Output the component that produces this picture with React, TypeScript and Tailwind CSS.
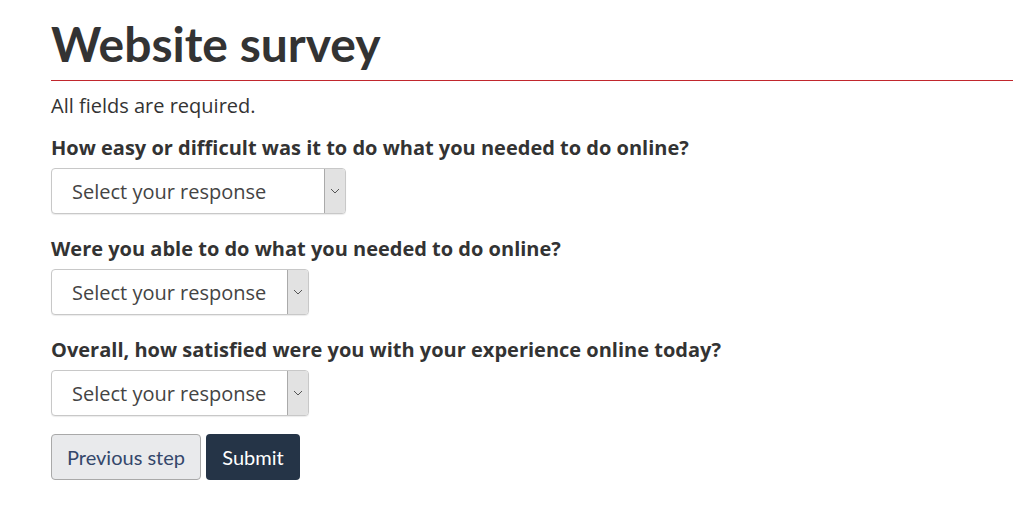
import React from 'react';

const questions = [
  { label: 'How easy or difficult was it to do what you needed to do online?', width: 'w-[295px]' },
  { label: 'Were you able to do what you needed to do online?', width: 'w-[258px]' },
  { label: 'Overall, how satisfied were you with your experience online today?', width: 'w-[258px]' },
];

function Chevron() {
  return (
    <svg width="10" height="6" viewBox="0 0 10 6" fill="none">
      <path d="M1 1 L5 5 L9 1" stroke="#555" strokeWidth="1" />
    </svg>
  );
}

export default function App() {
  return (
    <div className="min-h-[511px] bg-white pl-[51px] text-[#333] font-['Open_Sans',sans-serif]">
      <h1 className="pt-[15px] pb-[7px] font-['Lato',sans-serif] font-bold text-[48px] leading-[58px] text-[#333]">
        Website survey
      </h1>
      <div className="h-px bg-[#c1272d]" />
      <p className="mt-[11px] text-[20px] leading-[28px]">All fields are required.</p>

      <div className="mt-[14px] flex flex-col gap-[21px]">
        {questions.map((q, i) => (
          <div key={i} className="flex flex-col">
            <label className="font-bold text-[20px] leading-[28px] text-[#333]">{q.label}</label>
            <div className={`mt-[6px] flex h-[46px] ${q.width} rounded-[4px] border border-[#c8c8c8] bg-white overflow-hidden shadow-[0_1px_1px_rgba(0,0,0,0.08)]`}>
              <div className="flex flex-1 items-center pl-[20px] pt-[1px] text-[20px] text-[#444]">Select your response</div>
              <div className="flex w-[21px] items-center justify-center border-l border-[#aaa] bg-[#e2e2e2]">
                <Chevron />
              </div>
            </div>
          </div>
        ))}
      </div>

      <div className="mt-[18px] flex gap-[5px] font-['Lato',sans-serif] text-[20px]">
        <button className="h-[46px] w-[150px] rounded-[4px] border border-[#a9a9a9] bg-[#e9eaec] text-[#34476b]">
          Previous step
        </button>
        <button className="h-[46px] w-[94px] rounded-[4px] bg-[#253447] text-white">
          Submit
        </button>
      </div>
    </div>
  );
}
